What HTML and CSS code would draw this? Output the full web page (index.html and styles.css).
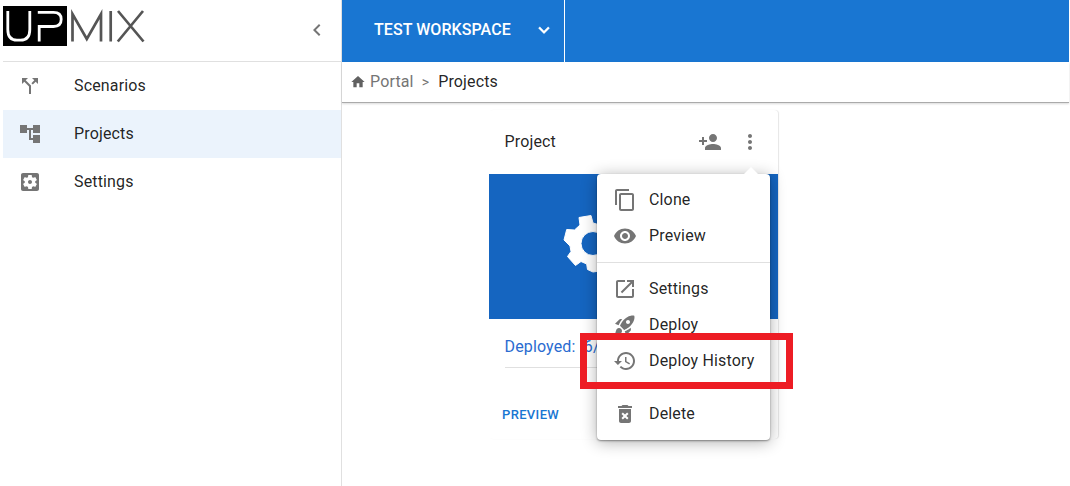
FILE: index.html
```html
<!DOCTYPE html>
<html lang="en">
<head>
<meta charset="utf-8">
<title>Projects</title>
<link rel="stylesheet" href="styles.css">
</head>
<body>
<div class="app">
  <aside class="sidebar">
    <div class="brand">
      <svg class="logo" width="143" height="40" viewBox="0 0 143 40" role="img" aria-label="UPMIX">
        <rect width="64" height="40" fill="#000"/>
        <g fill="none" stroke="#fff" stroke-width="2.8">
          <path d="M4.800 5V23.500Q4.800 34.200 14 34.200H17.500Q26.800 34.200 26.800 23.500V5"/>
          <path d="M36.200 35.500V20.500H50.500Q58.200 20.500 58.200 13.300Q58.200 6.400 50.500 6.400H34.800"/>
        </g>
        <g fill="none" stroke="#555" stroke-width="2.700">
          <path d="M69.500 35.500V8L83.800 33L98 8V35.500M107.700 5V35.500M115 5L140.500 35.500M140 5L114.800 35.500"/>
        </g>
      </svg>
      <svg class="icon collapse" viewBox="0 0 24 24"><path d="M15.410 7.410 14 6l-6 6 6 6 1.410-1.410L10.830 12z"/></svg>
    </div>
    <nav class="nav">
      <a class="nav-item"><svg class="icon" viewBox="0 0 24 24"><path d="m14 4 2.290 2.290-2.880 2.880 1.420 1.420 2.880-2.880L20 10V4zm-4 0H4v6l2.290-2.290 4.710 4.700V20h2v-8.410l-5.290-5.300z"/></svg>Scenarios</a>
      <a class="nav-item selected"><svg class="icon" viewBox="0 0 24 24"><path d="M22 11V3h-7v3H9V3H2v8h7V8h2v10h4v3h7v-8h-7v3h-2V8h2v3z"/></svg>Projects</a>
      <a class="nav-item"><svg class="icon" viewBox="0 0 24 24"><path d="M12 10c-1.100 0-2 .9-2 2s.9 2 2 2 2-.9 2-2-.9-2-2-2m7-7H5c-1.110 0-2 .9-2 2v14c0 1.100.89 2 2 2h14c1.110 0 2-.9 2-2V5c0-1.100-.89-2-2-2m-1.750 9c0 .23-.02.46-.05.68l1.480 1.160c.13.110.17.3.08.45l-1.400 2.420c-.09.150-.27.210-.43.150l-1.740-.7c-.36.280-.76.510-1.180.69l-.26 1.850c-.03.170-.18.3-.35.3h-2.800c-.17 0-.32-.13-.35-.29l-.26-1.850c-.43-.18-.82-.41-1.180-.69l-1.740.7c-.16.060-.34 0-.43-.15l-1.400-2.420c-.09-.15-.05-.34.080-.45l1.480-1.160c-.03-.23-.05-.46-.05-.69s.02-.46.050-.68l-1.480-1.160c-.13-.11-.17-.3-.08-.45l1.400-2.420c.09-.15.270-.21.430-.15l1.740.7c.36-.28.760-.51 1.180-.69l.26-1.850c.03-.17.180-.3.350-.3h2.800c.17 0 .32.130.35.290l.26 1.850c.43.180.82.410 1.180.69l1.740-.7c.16-.06.340 0 .43.150l1.400 2.420c.09.150.05.340-.08.450l-1.480 1.160c.03.230.05.460.05.690"/></svg>Settings</a>
    </nav>
  </aside>
  <div class="content">
    <header class="topbar">
      <button class="workspace">TEST WORKSPACE<svg class="chevron" viewBox="0 0 24 24"><path d="M7.410 8.590 12 13.170l4.590-4.580L18 10l-6 6-6-6z"/></svg></button>
    </header>
    <div class="crumbs">
      <svg class="home" viewBox="0 0 24 24"><path d="M10 20v-6h4v6h5v-8h3L12 3 2 12h3v8z"/></svg>
      <span class="parent">Portal</span><span class="sep">&gt;</span><span>Projects</span>
    </div>
    <main class="main">
      <article class="card">
        <div class="card-head">
          <span class="card-title">Project</span>
          <svg class="icon" viewBox="0 0 24 24"><path d="M15 12c2.210 0 4-1.790 4-4s-1.790-4-4-4-4 1.790-4 4 1.790 4 4 4m-9-2V7H4v3H1v2h3v3h2v-3h3v-2zm9 4c-2.670 0-8 1.340-8 4v2h16v-2c0-2.660-5.330-4-8-4"/></svg>
          <svg class="icon" viewBox="0 0 24 24"><path d="M12 8c1.100 0 2-.9 2-2s-.9-2-2-2-2 .9-2 2 .9 2 2 2m0 2c-1.100 0-2 .9-2 2s.9 2 2 2 2-.9 2-2-.9-2-2-2m0 6c-1.100 0-2 .9-2 2s.9 2 2 2 2-.9 2-2-.9-2-2-2"/></svg>
        </div>
        <div class="card-media">
          <svg class="gear" width="60" height="60" viewBox="0 0 60 60"><path fill="#fff" stroke="#fff" stroke-linejoin="round" fill-rule="evenodd" d="M17 4.500L29 2.500L31 10L38 12L45 8L53 17L49 23L51 30L58 33L55 45L48 44L43 50L44 57L31 59L25.500 56.500L24.700 51L19 48.500L13.500 52.500L5.500 43.500L9 38.500L8 33L2 27L4.700 16.500L12.500 17L18 12ZM31 18.500A12 12 0 1 0 31 42.500A12 12 0 1 0 31 18.500Z"/></svg>
        </div>
        <div class="deployed">Deployed: &nbsp;6/</div>
        <div class="actions">PREVIEW</div>
        <div class="menu">
          <svg class="arrow" width="16" height="8" viewBox="0 0 16 8"><path fill="#fff" d="M0 8L8 0L16 8Z"/></svg>
          <div class="menu-item"><svg class="icon" viewBox="0 0 24 24"><path d="M16 1H4c-1.100 0-2 .9-2 2v14h2V3h12zm3 4H8c-1.100 0-2 .9-2 2v14c0 1.100.9 2 2 2h11c1.100 0 2-.9 2-2V7c0-1.100-.9-2-2-2m0 16H8V7h11z"/></svg>Clone</div>
          <div class="menu-item"><svg class="icon" viewBox="0 0 24 24"><path d="M12 4.500C7 4.500 2.730 7.610 1 12c1.730 4.390 6 7.500 11 7.500s9.270-3.110 11-7.500c-1.730-4.390-6-7.500-11-7.500M12 17c-2.760 0-5-2.240-5-5s2.240-5 5-5 5 2.240 5 5-2.240 5-5 5m0-8c-1.660 0-3 1.340-3 3s1.340 3 3 3 3-1.340 3-3-1.340-3-3-3"/></svg>Preview</div>
          <hr class="divider">
          <div class="menu-item"><svg class="icon" viewBox="0 0 24 24"><path d="M19 19H5V5h7V3H5c-1.110 0-2 .9-2 2v14c0 1.100.89 2 2 2h14c1.100 0 2-.9 2-2v-7h-2zM14 3v2h3.590l-9.830 9.830 1.410 1.410L19 6.410V10h2V3z"/></svg>Settings</div>
          <div class="menu-item"><svg class="icon" viewBox="0 0 24 24"><path d="m9.190 6.350c-2.040 2.290-3.440 5.580-3.570 5.890L2 10.690l4.050-4.050c.47-.47 1.150-.68 1.810-.55zM11.170 17s3.740-1.550 5.890-3.700c5.400-5.400 4.500-9.620 4.210-10.570-.95-.3-5.170-1.190-10.570 4.210C8.550 9.090 7 12.830 7 12.830zm6.480-2.190c-2.290 2.040-5.580 3.440-5.890 3.570L13.310 22l4.050-4.050c.47-.47.680-1.150.55-1.810zM9 18c0 .83-.34 1.580-.88 2.120C6.940 21.300 2 22 2 22s.7-4.940 1.880-6.120C4.420 15.340 5.170 15 6 15c1.660 0 3 1.340 3 3m4-9c0-1.100.9-2 2-2s2 .9 2 2-.9 2-2 2-2-.9-2-2"/></svg>Deploy</div>
          <div class="menu-item"><svg class="icon" viewBox="0 0 24 24"><path d="M13 3c-4.970 0-9 4.030-9 9H1l3.890 3.890.07.140L9 12H6c0-3.870 3.130-7 7-7s7 3.130 7 7-3.130 7-7 7c-1.930 0-3.680-.79-4.940-2.060l-1.420 1.420C8.270 19.990 10.510 21 13 21c4.970 0 9-4.030 9-9s-4.030-9-9-9m-1 5v5l4.280 2.540.72-1.210-3.500-2.080V8z"/></svg>Deploy History</div>
          <hr class="divider">
          <div class="menu-item"><svg class="icon" viewBox="0 0 24 24"><path fill-rule="evenodd" d="M6 19c0 1.100.9 2 2 2h8c1.100 0 2-.9 2-2V7H6zm2.460-7.120 1.410-1.410L12 12.590l2.120-2.120 1.410 1.410L13.410 14l2.120 2.120-1.410 1.410L12 15.410l-2.120 2.120-1.410-1.410L10.590 14zM15.500 4l-1-1h-5l-1 1H5v2h14V4z"/></svg>Delete</div>
        </div>
        <div class="highlight"></div>
      </article>
    </main>
  </div>
</div>
</body>
</html>
```

FILE: styles.css
```css
* { box-sizing: border-box; }
body {
  margin: 0;
  background: #fff;
  color: rgba(0, 0, 0, .87);
  font: 400 16px/24px Roboto, sans-serif;
  letter-spacing: .15px;
}
.app { display: flex; height: 486px; overflow: hidden; }
.icon { width: 24px; height: 24px; flex: none; fill: #757575; }

.sidebar { width: 342px; flex: none; padding-left: 3px; border-right: 1px solid #e0e0e0; }
.brand {
  display: flex;
  justify-content: space-between;
  height: 62px;
  padding: 6px 12px 0 0;
  border-bottom: 1px solid #e0e0e0;
}
.collapse { margin-top: 12px; }
.nav-item { display: flex; align-items: center; gap: 32px; height: 48px; padding-left: 15px; }
.selected { background: #ebf3fc; }

.content { flex: 1; min-width: 0; padding-right: 1px; }
.topbar { display: flex; height: 62px; background: #1976d2; }
.workspace {
  display: flex;
  align-items: center;
  justify-content: space-between;
  width: 223px;
  padding: 0 9px 3px 32px;
  border: 0;
  border-right: 1px solid #fff;
  background: none;
  color: #fff;
  font: 500 16px/24px Roboto, sans-serif;
  letter-spacing: .07px;
}
.chevron { width: 22px; height: 22px; fill: #fff; stroke: #fff; stroke-width: .4; }
.crumbs {
  display: flex;
  align-items: center;
  height: 41px;
  padding: 0 0 0 8px;
  border-bottom: 1px solid #aaa;
  box-shadow: 0 1px 2px rgba(0, 0, 0, .15);
}
.home { width: 16px; height: 16px; margin-right: 4px; fill: #616161; }
.parent { color: #757575; }
.sep { margin: 0 9px 0 8px; color: #757575; font-size: 14px; }

.main { padding: 7px 0 0 147px; }
.card {
  position: relative;
  width: 289px;
  height: 329px;
  border-radius: 4px;
  box-shadow: 1px 0 1px rgba(0, 0, 0, .1);
}
.card-head { display: flex; align-items: center; gap: 16px; height: 64px; padding: 0 16px 0 15.5px; }
.card-title { flex: 1; }
.card-media { height: 145px; padding: 39px 0 0 73px; background: #1565c0; }
.gear { display: block; }
.deployed { height: 49px; margin: 0 16px; padding-top: 16px; border-bottom: 1px solid #e0e0e0; color: #2a6bd0; text-indent: -.5px; }
.actions { padding: 35px 13px 0; color: #1976d2; font-size: 13px; font-weight: 500; letter-spacing: .35px; }

/* Context menu opened from the card's overflow button */
.menu {
  position: absolute;
  left: 108px;
  top: 64px;
  width: 173px;
  height: 266px;
  padding: 8px 0;
  border-radius: 4px;
  background: #fff;
  box-shadow: 0 1px 2px rgba(0, 0, 0, .4), 0 2px 16px rgba(0, 0, 0, .32);
}
.arrow { position: absolute; right: 11px; top: -7px; }
.menu-item { display: flex; align-items: center; gap: 12px; height: 36px; padding-left: 16px; }
.divider { height: 1px; margin: 8px 0; border: 0; background: #e0e0e0; }
.highlight { position: absolute; left: 91px; top: 223px; width: 213px; height: 56px; border: 7px solid #ed1c24; }
```
